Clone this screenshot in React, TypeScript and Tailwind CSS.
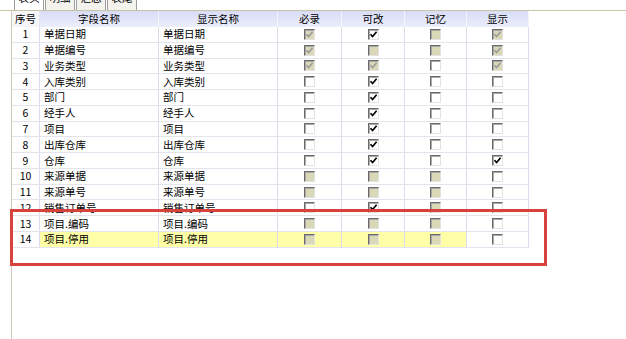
import React from "react"

type Box = "c" | "u" | "dc" | "du"

const rows: [string, string, string, Box, Box, Box, Box][] = [
  ["1", "单据日期", "单据日期", "dc", "c", "du", "dc"],
  ["2", "单据编号", "单据编号", "dc", "du", "du", "dc"],
  ["3", "业务类型", "业务类型", "dc", "dc", "u", "dc"],
  ["4", "入库类别", "入库类别", "u", "c", "u", "u"],
  ["5", "部门", "部门", "u", "c", "u", "u"],
  ["6", "经手人", "经手人", "u", "c", "u", "u"],
  ["7", "项目", "项目", "u", "c", "u", "u"],
  ["8", "出库仓库", "出库仓库", "u", "c", "u", "u"],
  ["9", "仓库", "仓库", "u", "c", "u", "c"],
  ["10", "来源单据", "来源单据", "du", "du", "du", "u"],
  ["11", "来源单号", "来源单号", "du", "du", "du", "u"],
  ["12", "销售订单号", "销售订单号", "u", "c", "du", "u"],
  ["13", "项目.编码", "项目.编码", "du", "du", "du", "u"],
  ["14", "项目.停用", "项目.停用", "du", "du", "du", "u"],
]

const tabs = ["表头", "明细", "汇总", "表尾"]

function Check({ state }: { state: Box }) {
  const disabled = state === "dc" || state === "du"
  const checked = state === "c" || state === "dc"
  return (
    <div
      className={`w-[11px] h-[11px] border border-t-[#6a6a6a] border-l-[#6a6a6a] border-b-[#e2e2e2] border-r-[#e2e2e2] shadow-[inset_1px_1px_0_#a8a8a8] flex items-center justify-center ${
        disabled ? "bg-[#dad8b6]" : "bg-white"
      }`}
    >
      {checked && (
        <svg width="9" height="9" viewBox="0 0 9 9">
          <path
            d="M1.5 4.2 L3.6 6.5 L7.6 1.8"
            fill="none"
            stroke={disabled ? "#9c9c9c" : "#000"}
            strokeWidth="1.7"
          />
        </svg>
      )}
    </div>
  )
}

export default function App() {
  return (
    <div
      className="relative w-[626px] h-[339px] overflow-hidden bg-white text-black text-[10.5px]"
      style={{ fontFamily: '"Noto Sans CJK SC", "Noto Sans", sans-serif' }}
    >
      {/* tab strip, top cut off */}
      <div className="h-[11px] flex items-end pl-[14px] border-b border-[#c7c5a5] overflow-hidden">
        {tabs.map((t, i) => (
          <div
            key={t}
            className={`w-[30px] h-[22px] mr-[1px] flex items-start justify-center pt-[3px] leading-[12px] border-l border-r border-t border-[#9e9e9e] ${
              i === 0 ? "bg-white" : "bg-[#f3f2ec]"
            }`}
          >
            {t}
          </div>
        ))}
      </div>

      <div className="ml-[11px] h-full border-l border-[#cfcbb8]">
        <div className="w-[517px]">
          {/* header */}
          <div className="flex h-[16px] leading-[15px]">
            <div className="w-[28px] text-center bg-[#f6f6f8] border-r border-[#e4e4ee]">序号</div>
            {["字段名称", "显示名称", "必录", "可改", "记忆", "显示"].map((h, i) => (
              <div
                key={h}
                className={`${
                  ["w-[119px]", "w-[119px]", "w-[64px]", "w-[63px]", "w-[62px]", "w-[62px]"][i]
                } text-center bg-gradient-to-b from-[#d8dcf6] to-[#eceefb] border-r border-[#f4f5fd]`}
              >
                {h}
              </div>
            ))}
          </div>

          {rows.map((r, idx) => {
            const hl = idx === 13
            const cell = hl ? "bg-[#ffffa8]" : "bg-white"
            return (
              <div key={r[0]} className="flex h-[15.77px] leading-[14px] border-b border-[#e4e4ef]">
                <div className="w-[28px] text-center bg-white border-r border-[#dcdcec] flex items-center justify-center">
                  {r[0]}
                </div>
                <div className={`w-[119px] pl-[4px] border-r border-[#dcdcec] flex items-center ${cell}`}>{r[1]}</div>
                <div className={`w-[119px] pl-[4px] border-r border-[#dcdcec] flex items-center ${cell}`}>{r[2]}</div>
                <div className={`w-[64px] border-r border-[#dcdcec] flex items-center justify-center ${cell}`}>
                  <Check state={r[3]} />
                </div>
                <div className={`w-[63px] border-r border-[#dcdcec] flex items-center justify-center ${cell}`}>
                  <Check state={r[4]} />
                </div>
                <div className={`w-[62px] border-r border-[#dcdcec] flex items-center justify-center ${cell}`}>
                  <Check state={r[5]} />
                </div>
                <div className="w-[62px] border-r border-[#dcdcec] flex items-center justify-center bg-white">
                  <Check state={r[6]} />
                </div>
              </div>
            )
          })}
        </div>
      </div>

      {/* annotation box */}
      <div className="absolute left-[10px] top-[209px] w-[537px] h-[57px] border-[3px] border-[#d7423d]" />
    </div>
  )
}
